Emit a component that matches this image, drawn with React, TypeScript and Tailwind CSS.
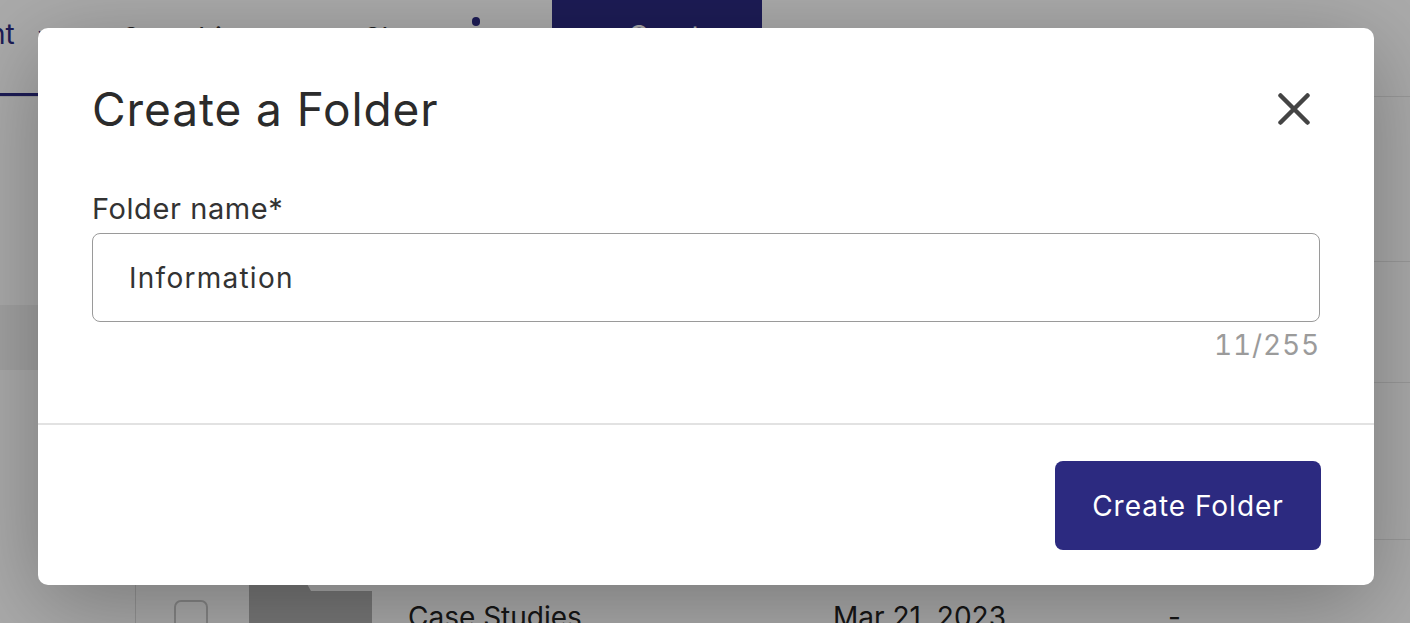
import React from 'react';

const font = { fontFamily: 'Inter, "Noto Sans", sans-serif' };

function FolderThumb() {
  return (
    <svg width="123" height="60" viewBox="0 0 123 60" className="block">
      <path d="M0 0 H58 L62 7 H123 V60 H0 Z" fill="#b3b3b3" />
    </svg>
  );
}

function Background() {
  return (
    <div className="flex h-full w-full flex-col bg-white">
      {/* top nav */}
      <div className="flex h-[97px] shrink-0 border-b border-[#e6e6e6]">
        <div className="ml-[-90px] flex w-[170px] items-start gap-[22px] border-b-[3px] border-[#2c2a80] pt-[20px] text-[28px] leading-none text-[#2c2a80]">
          <span>Content</span>
          <span className="mt-[2px] text-[18px]">⌄</span>
        </div>
        <div className="ml-[42px] pt-[24px] text-[28px] leading-none text-[#333]">Searching</div>
        <div className="ml-[108px] pt-[24px] text-[28px] leading-none text-[#333]">Share</div>
        <div className="ml-[32px] flex flex-col items-center gap-[5px] pt-[17px]">
          <span className="h-[9px] w-[8px] rounded-full bg-[#2c2a80]" />
          <span className="h-[9px] w-[8px] rounded-full bg-[#2c2a80]" />
          <span className="h-[9px] w-[8px] rounded-full bg-[#2c2a80]" />
        </div>
        <div className="ml-[72px] flex h-[72px] w-[210px] items-center justify-center gap-3 bg-[#2c2a80] text-[28px] text-white">
          <span>+</span>
          <span>Create</span>
        </div>
      </div>

      <div className="flex flex-1">
        {/* sidebar */}
        <div className="flex w-[135px] shrink-0 flex-col">
          <div className="h-[208px]" />
          <div className="h-[65px] bg-[#f2f2f2]" />
        </div>

        {/* table */}
        <div className="flex flex-1 flex-col border-l border-[#dddddd]">
          <div className="h-[165px] border-b border-[#e6e6e6]" />
          <div className="h-[121px] border-b border-[#e6e6e6]" />
          <div className="h-[157px] border-b border-[#e6e6e6]" />
          <div className="flex items-start pt-[44px] text-[28px] leading-none text-[#222]">
            <div className="ml-[38px] mt-[16px] h-[34px] w-[34px] rounded-[7px] border-2 border-[#c8c8c8] bg-white" />
            <div className="ml-[41px]">
              <FolderThumb />
            </div>
            <div className="ml-[36px] mt-[19px] w-[425px]">Case Studies</div>
            <div className="mt-[19px] w-[335px]">Mar 21, 2023</div>
            <div className="mt-[19px]">-</div>
          </div>
        </div>
      </div>
    </div>
  );
}

export default function App() {
  return (
    <div className="relative h-[623px] w-full overflow-hidden" style={font}>
      <Background />

      {/* dim overlay */}
      <div className="absolute inset-0 bg-black/[0.33]" />

      {/* dialog */}
      <div className="absolute left-[38px] top-[28px] flex h-[557px] w-[1336px] flex-col rounded-[10px] bg-white shadow-[0_20px_90px_rgba(0,0,0,0.3)]">
        <div className="px-[54px] pb-[64px] pt-[58px]">
          <div className="flex items-center justify-between">
            <h2 className="text-[46px] font-normal leading-none tracking-[0.02em] text-[#2b2b2b]">
              Create a Folder
            </h2>
            <button className="mr-[10px] text-[#444]" aria-label="Close">
              <svg width="32" height="32" viewBox="0 0 32 32" className="block">
                <path
                  d="M2.5 2.5 L29.5 29.5 M29.5 2.5 L2.5 29.5"
                  stroke="currentColor"
                  strokeWidth="4.5"
                  strokeLinecap="round"
                  fill="none"
                />
              </svg>
            </button>
          </div>

          <label className="mt-[62px] block text-[29px] leading-none tracking-[0.02em] text-[#333]">
            Folder name*
          </label>
          <div className="mt-[10px] flex h-[89px] items-center rounded-[8px] border-[1.5px] border-[#9a9a9a] pl-[36px]">
            <span className="text-[28px] leading-none tracking-[0.045em] text-[#333]">Information</span>
          </div>
          <div className="mt-[9px] text-right text-[28px] leading-none tabular-nums tracking-[0.03em] text-[#9b9b9b]">
            11/255
          </div>
        </div>

        <div className="flex flex-1 justify-end border-t-2 border-[#e2e2e2] px-[53px] pt-[36px]">
          <button className="flex h-[89px] w-[266px] items-center justify-center rounded-[8px] bg-[#2c2a80] text-[28px] tracking-[0.035em] text-white">
            Create Folder
          </button>
        </div>
      </div>
    </div>
  );
}
